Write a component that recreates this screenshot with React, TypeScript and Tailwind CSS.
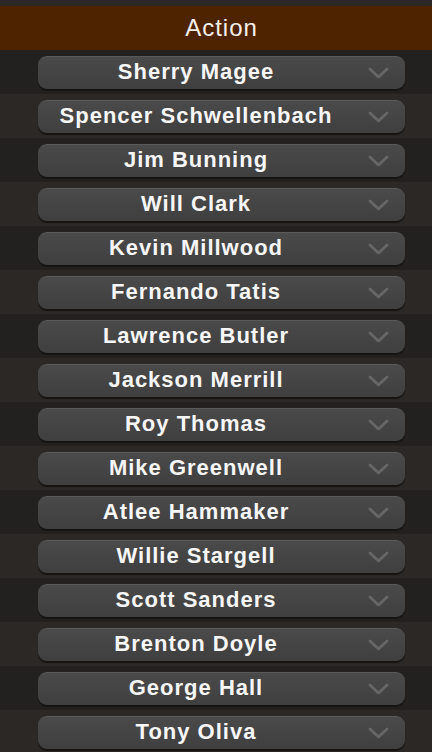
const players = [
  "Sherry Magee",
  "Spencer Schwellenbach",
  "Jim Bunning",
  "Will Clark",
  "Kevin Millwood",
  "Fernando Tatis",
  "Lawrence Butler",
  "Jackson Merrill",
  "Roy Thomas",
  "Mike Greenwell",
  "Atlee Hammaker",
  "Willie Stargell",
  "Scott Sanders",
  "Brenton Doyle",
  "George Hall",
  "Tony Oliva",
];

function Chevron() {
  return (
    <svg width="21" height="12" viewBox="0 0 21 12" fill="none">
      <polyline
        points="2,2 10.5,10 19,2"
        stroke="#666666"
        strokeWidth="3"
        strokeLinecap="round"
        strokeLinejoin="round"
      />
    </svg>
  );
}

function PlayerSelect({ name }: { name: string }) {
  return (
    <div className="flex h-[33px] w-[367px] items-center rounded-[9px] border-t border-[#5a5a5a] bg-gradient-to-b from-[#4a4a4a] to-[#3f3f3f] shadow-[0_2px_1px_#161413]">
      <div className="flex-1 text-center">
        <span className="whitespace-nowrap text-[22px] font-bold leading-[24px] tracking-[1px] text-[#f6f6f6]">
          {name}
        </span>
      </div>
      <div className="flex w-[51px] items-center pl-[14px]">
        <Chevron />
      </div>
    </div>
  );
}

export default function App() {
  return (
    <div
      className="h-[752px] w-[432px] overflow-hidden bg-[#2b2826]"
      style={{ fontFamily: '"Liberation Sans", Arial, sans-serif' }}
    >
      <div className="h-[6px]" />
      <div className="flex h-[44px] items-center justify-center bg-[#4e2300] pl-[11px] text-[24px] tracking-[1px] text-[#f4f0ec]">
        Action
      </div>
      {players.map((name, i) => (
        <div
          key={name}
          className={`flex h-[44px] items-start pl-[38px] pt-[6px] ${
            i % 2 === 0 ? "bg-[#232120]" : "bg-[#2b2825]"
          }`}
        >
          <PlayerSelect name={name} />
        </div>
      ))}
    </div>
  );
}
